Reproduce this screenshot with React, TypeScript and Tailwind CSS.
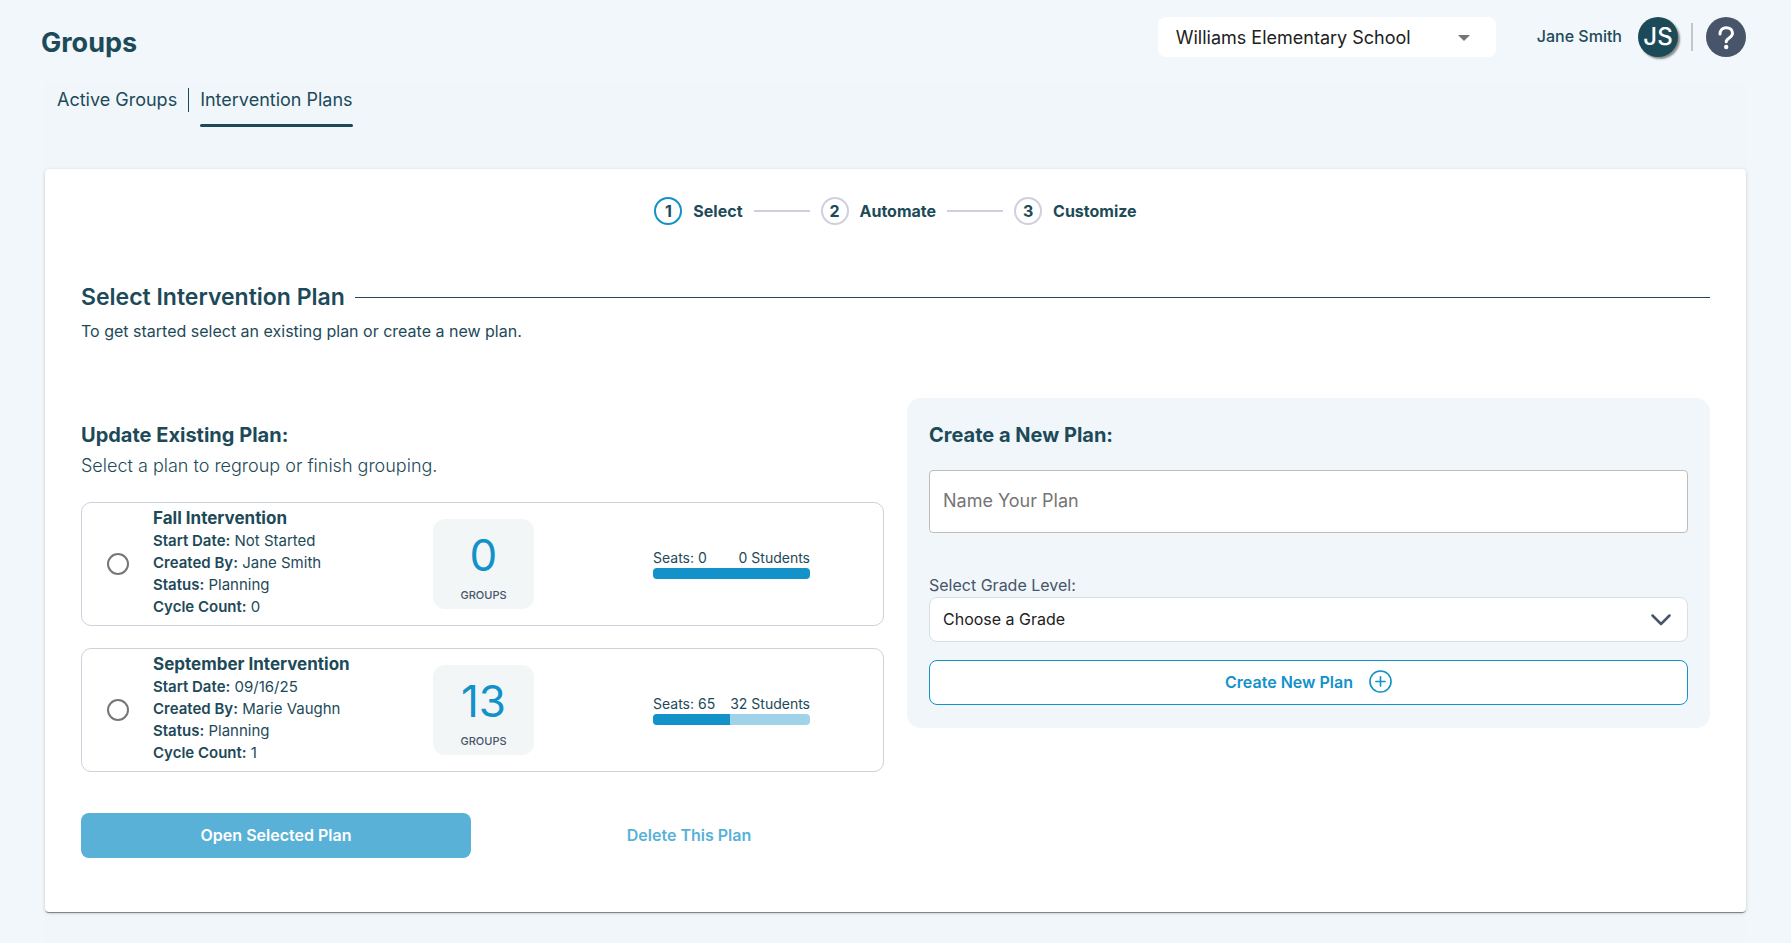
import { Fragment } from 'react'

const steps = [
  { number: 1, label: 'Select', active: true },
  { number: 2, label: 'Automate', active: false },
  { number: 3, label: 'Customize', active: false }
]

const plans = [
  {
    id: 'fall',
    name: 'Fall Intervention',
    details: [
      ['Start Date:', 'Not Started'],
      ['Created By:', 'Jane Smith'],
      ['Status:', 'Planning'],
      ['Cycle Count:', '0']
    ],
    groups: 0,
    seats: 0,
    students: 0
  },
  {
    id: 'september',
    name: 'September Intervention',
    details: [
      ['Start Date:', '09/16/25'],
      ['Created By:', 'Marie Vaughn'],
      ['Status:', 'Planning'],
      ['Cycle Count:', '1']
    ],
    groups: 13,
    seats: 65,
    students: 32
  }
]

type Plan = (typeof plans)[number]

function Header() {
  return (
    <header className="flex h-[82px] items-start justify-between pl-[41px] pr-[45px] pt-[17px]">
      <h1 className="mt-1 text-[27px] font-bold leading-[44px]">Groups</h1>
      <div className="flex items-center">
        <div className="relative w-[338px]">
          <select
            aria-label="School"
            className="h-10 w-full appearance-none rounded-lg bg-white pl-[18px] pr-12 pt-0.5 text-lg text-[#212121]"
          >
            <option>Williams Elementary School</option>
          </select>
          <svg viewBox="0 0 12 6" className="pointer-events-none absolute right-[26px] top-[18px] h-1.5 w-3" fill="#757575">
            <path d="M0 0h12L6 6z" />
          </svg>
        </div>
        <span className="ml-[41px] pb-0.5 text-base font-medium">Jane Smith</span>
        <button
          type="button"
          className="ml-4 size-10 rounded-full bg-[#1d4a59] text-2xl font-medium text-white shadow-[2px_2px_2px_#8a8a8a]"
        >
          JS
        </button>
        <span className="ml-[13px] h-7 w-0.5 bg-[#c3c6c9]" />
        <button type="button" aria-label="Help" className="ml-[13px]">
          <svg viewBox="0 0 40 40" className="size-10" fill="none">
            <circle cx="20" cy="20" r="20" fill="#475469" />
            <path
              d="M14 17c0-4 2.800-6.300 6.300-6.300s6.200 2.200 6.200 5.600c0 4.700-6.300 4.500-6.300 8.500"
              stroke="white"
              strokeWidth="3"
              strokeLinecap="round"
            />
            <circle cx="20.200" cy="30" r="2.200" fill="white" />
          </svg>
        </button>
      </div>
    </header>
  )
}

function Tabs() {
  return (
    <nav className="flex items-start pl-3 pt-1.5 text-lg">
      <a href="#active" className="leading-6">
        Active Groups
      </a>
      <span className="mx-[11px] h-6 w-px bg-[#1d4a59]" />
      <a href="#plans" aria-current="page" className="leading-6">
        Intervention Plans
        <span className="mt-3 block h-[3px] rounded-full bg-[#1d4a59]" />
      </a>
    </nav>
  )
}

function Stepper() {
  return (
    <ol className="flex items-center justify-center text-base font-bold">
      {steps.map((step, index) => (
        <Fragment key={step.number}>
          {index > 0 && <li aria-hidden="true" className="mx-[11px] h-0.5 w-14 bg-[#cdd1de]" />}
          <li className="flex items-center gap-[11px]">
            <span
              className={`flex size-7 items-center justify-center rounded-full border-2 ${
                step.active ? 'border-[#1292c9]' : 'border-[#cdd1de]'
              }`}
            >
              {step.number}
            </span>
            {step.label}
          </li>
        </Fragment>
      ))}
    </ol>
  )
}

function PlanCard({ plan }: { plan: Plan }) {
  const filled = plan.seats > 0 ? Math.round((plan.students / plan.seats) * 100) : 100

  return (
    <label
      htmlFor={plan.id}
      className="grid min-h-[124px] grid-cols-[71px_280fr_220fr_157fr] items-center rounded-[10px] border border-[#cdd1dc] pr-[73px]"
    >
      <input
        id={plan.id}
        type="radio"
        name="plan"
        className="ml-[25px] size-[22px] appearance-none rounded-full border-2 border-[#767676] bg-white checked:border-[6px] checked:border-[#1292c9]"
      />
      <div className="pb-1 text-[15px] leading-[22px]">
        <h4 className="text-[17px] font-bold leading-6">{plan.name}</h4>
        {plan.details.map(([name, value]) => (
          <p key={name}>
            <span className="font-semibold">{name}</span> {value}
          </p>
        ))}
      </div>
      <div className="flex h-[90px] w-[101px] flex-col items-center rounded-xl bg-[#f2f6f7] pt-2">
        <span className="text-[44px] leading-[56px] text-[#1292c9]">{plan.groups}</span>
        <span className="mt-1 text-[11px] font-medium leading-4 text-[#475469]">GROUPS</span>
      </div>
      <div className="pb-0.5 text-sm">
        <div className="flex justify-between">
          <span>Seats: {plan.seats}</span>
          <span>{plan.students} Students</span>
        </div>
        <div className="h-[11px] overflow-hidden rounded bg-[#a0d3e9]">
          <div className="h-full bg-[#1292c9]" style={{ width: `${filled}%` }} />
        </div>
      </div>
    </label>
  )
}

function ExistingPlans() {
  return (
    <section className="pt-[23px]">
      <h3 className="text-xl font-bold leading-7">Update Existing Plan:</h3>
      <p className="mt-[3px] text-lg font-light leading-7">Select a plan to regroup or finish grouping.</p>
      <div className="mt-[22px] flex flex-col gap-[22px]">
        {plans.map((plan) => (
          <PlanCard key={plan.id} plan={plan} />
        ))}
      </div>
      <div className="mt-[41px] grid grid-cols-2 gap-[23px] text-base font-semibold">
        <button type="button" className="h-[45px] rounded-lg bg-[#59b1d8] pb-0.5 text-white">
          Open Selected Plan
        </button>
        <button type="button" className="h-[45px] pb-0.5 text-[#59b1d8]">
          Delete This Plan
        </button>
      </div>
    </section>
  )
}

function NewPlan() {
  return (
    <form className="flex flex-col self-start rounded-[14px] bg-[#f0f6fa] px-[22px] py-[23px]">
      <h3 className="text-xl font-bold leading-7">Create a New Plan:</h3>
      <input
        type="text"
        aria-label="Plan name"
        placeholder="Name Your Plan"
        className="mt-[21px] h-[63px] rounded border border-[#bdbdbd] bg-white px-[13px] pb-0.5 text-lg placeholder:text-[#757575]"
      />
      <label htmlFor="grade" className="mt-10 text-base text-[#475469]">
        Select Grade Level:
      </label>
      <div className="relative">
        <select
          id="grade"
          className="h-[45px] w-full appearance-none rounded-lg border border-[#d5e0e4] bg-white px-[13px] pb-0.5 text-base text-[#212121]"
        >
          <option>Choose a Grade</option>
        </select>
        <svg
          viewBox="0 0 20 12"
          className="pointer-events-none absolute right-[17px] top-[17px] h-3 w-5"
          fill="none"
          stroke="#475469"
          strokeWidth="2.500"
          strokeLinecap="round"
          strokeLinejoin="round"
        >
          <path d="M1.500 1.500 10 10l8.500-8.500" />
        </svg>
      </div>
      <button
        type="button"
        className="mt-[18px] flex h-[45px] items-center justify-center gap-4 rounded-lg border border-[#1292c9] bg-white pb-0.5 text-base font-semibold text-[#1292c9]"
      >
        Create New Plan
        <svg viewBox="0 0 24 24" className="size-[23px]" fill="none" stroke="currentColor" strokeWidth="1.700" strokeLinecap="round">
          <circle cx="12" cy="12" r="11" />
          <path d="M12 7.200v9.600M7.200 12h9.600" />
        </svg>
      </button>
    </form>
  )
}

export default function App() {
  return (
    <div className="flex min-h-screen flex-col bg-[#f1f7fa] font-['Inter',sans-serif] text-[#1d4a59]">
      <Header />
      <main className="mx-[45px] flex-1 bg-[#f0f6fa] pb-8">
        <Tabs />
        <div className="mt-[42px] rounded bg-white px-9 pb-[54px] pt-7 shadow-[0_2px_1px_-1px_rgba(0,0,0,0.3),0_1px_1px_0_rgba(0,0,0,0.2),0_1px_4px_0_rgba(0,0,0,0.14)]">
          <Stepper />
          <div className="mt-14 flex items-center gap-[10px]">
            <h2 className="text-[23px] font-semibold leading-8">Select Intervention Plan</h2>
            <span className="h-px flex-1 bg-[#1d4a59]" />
          </div>
          <p className="mt-1.5 text-base">To get started select an existing plan or create a new plan.</p>
          <div className="mt-[55px] grid grid-cols-2 gap-[23px]">
            <ExistingPlans />
            <NewPlan />
          </div>
        </div>
      </main>
    </div>
  )
}
